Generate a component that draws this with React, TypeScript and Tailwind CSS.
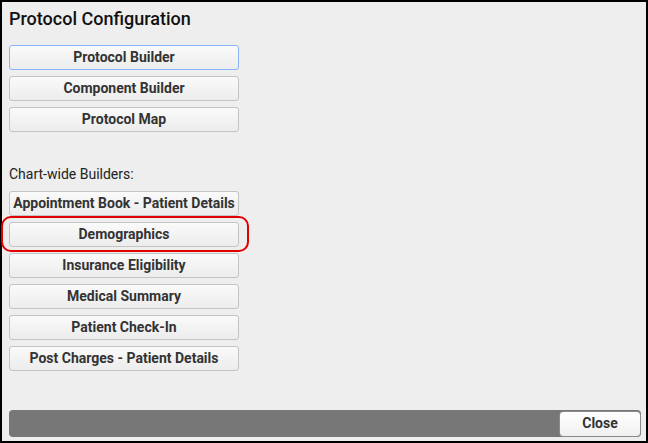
import React from "react";

const chartWide = [
  "Appointment Book - Patient Details",
  "Demographics",
  "Insurance Eligibility",
  "Medical Summary",
  "Patient Check-In",
  "Post Charges - Patient Details",
];

const Btn: React.FC<{ label: string; focused?: boolean }> = ({ label, focused }) => (
  <button
    className={
      "h-[25px] w-[230px] rounded-[3px] border bg-gradient-to-b from-[#fafafa] to-[#ececec] text-[14px] font-bold text-[#333] " +
      (focused ? "border-[#8ab4f8]" : "border-[#c4c4c4]")
    }
  >
    {label}
  </button>
);

export default function App() {
  return (
    <div
      className="flex h-[443px] w-[648px] flex-col border-2 border-black bg-[#eeeeee] pl-[7px] pr-[5px]"
      style={{ fontFamily: "Roboto, 'Liberation Sans', sans-serif" }}
    >
      <h1 className="mt-[5px] text-[18px] font-medium leading-[24px] text-[#111]">Protocol Configuration</h1>

      {/* Top builders */}
      <div className="mt-[14px] flex flex-col gap-[6px]">
        <Btn label="Protocol Builder" focused />
        <Btn label="Component Builder" />
        <Btn label="Protocol Map" />
      </div>

      <p className="mt-[33px] text-[14px] leading-[18px] text-[#222]">Chart-wide Builders:</p>

      <div className="mt-[8px] flex flex-col gap-[6px]">
        {chartWide.map((l) =>
          l === "Demographics" ? (
            <div key={l} className="relative">
              <Btn label={l} />
              <div className="pointer-events-none absolute -left-[8px] -top-[6px] h-[36px] w-[248px] rounded-[10px] border-[2.5px] border-[#e00000]" />
            </div>
          ) : (
            <Btn key={l} label={l} />
          )
        )}
      </div>

      {/* Footer */}
      <div className="mb-[4px] mt-auto flex h-[27px] items-center justify-end rounded-[4px] bg-[#777777]">
        <button className="h-[26px] w-[82px] rounded-[4px] border border-[#8a8a8a] bg-gradient-to-b from-[#ffffff] to-[#f0f0f0] text-[14px] font-bold text-[#333]">
          Close
        </button>
      </div>
    </div>
  );
}
